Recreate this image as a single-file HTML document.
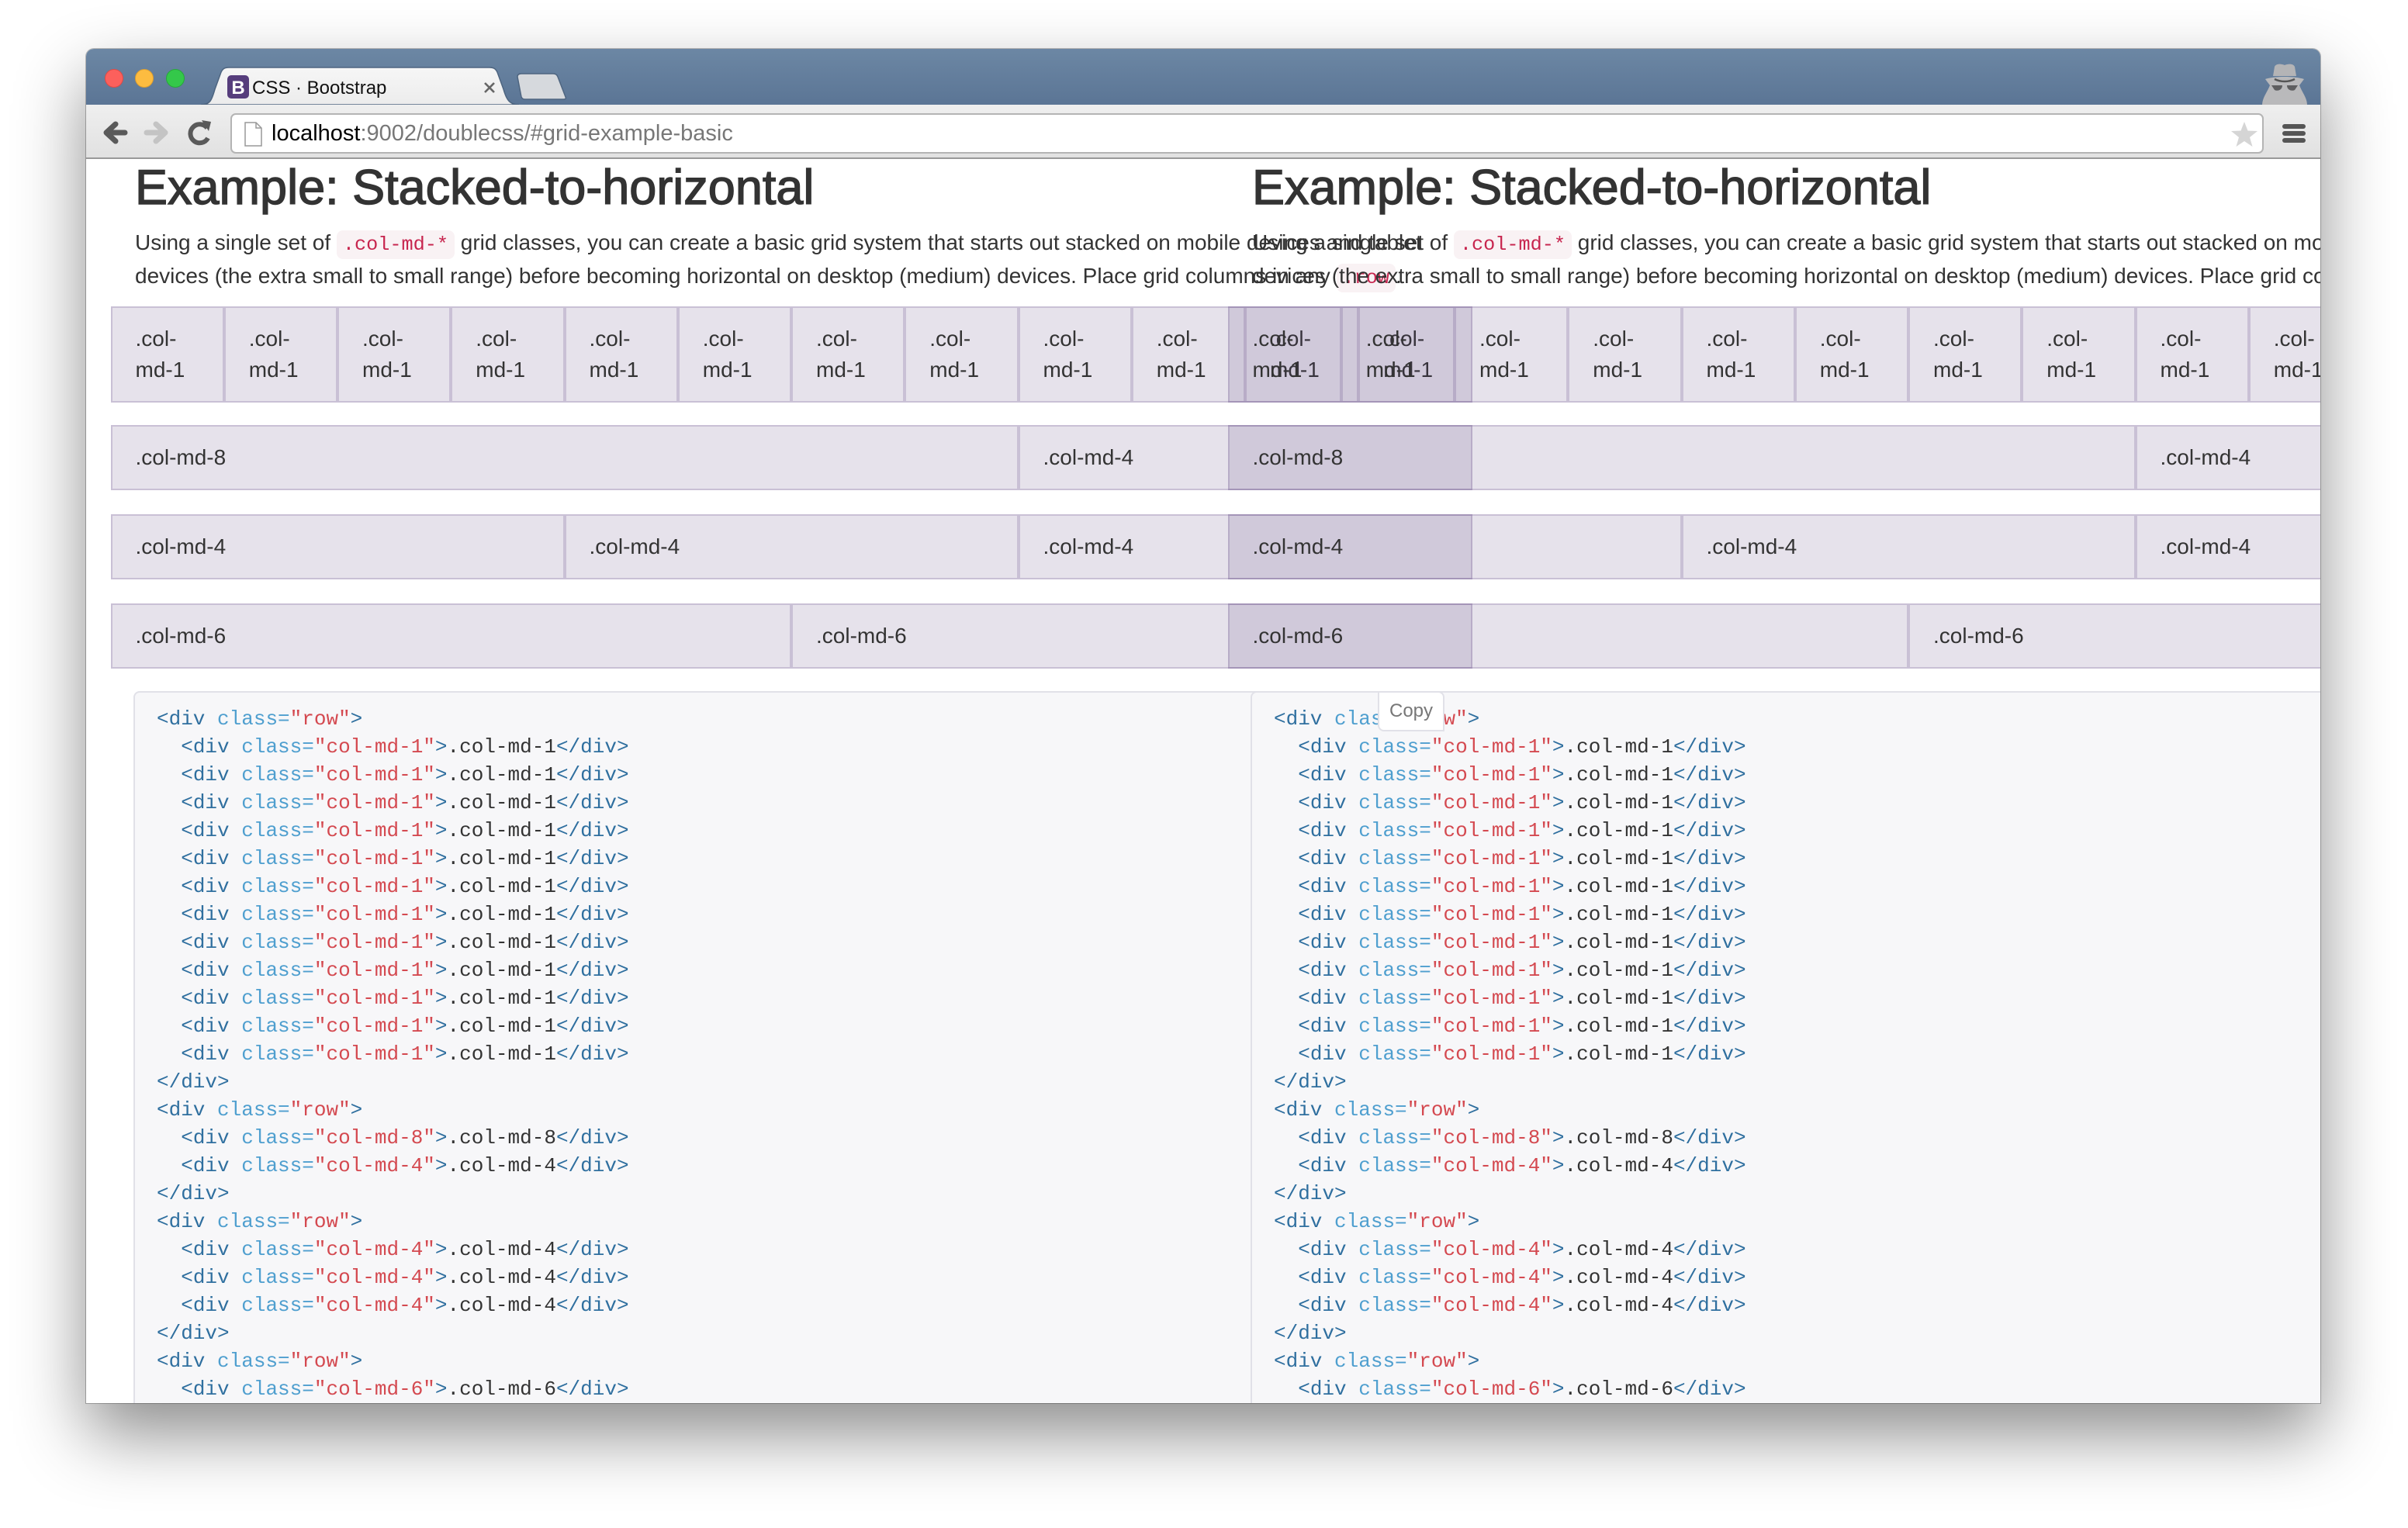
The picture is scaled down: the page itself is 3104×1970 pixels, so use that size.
<!DOCTYPE html>
<html><head><meta charset="utf-8"><style>
*{box-sizing:border-box;margin:0;padding:0}
body{width:3104px;height:1970px;background:#fff;overflow:hidden;position:relative;font-family:"Liberation Sans",Arial,sans-serif}
#win{position:absolute;left:111px;top:63px;width:2880px;height:1746px;border-radius:10px 10px 0 0;overflow:hidden;background:#fff;box-shadow:0 40px 90px rgba(0,0,0,.45),0 0 0 1px rgba(0,0,0,.25)}
#title{position:absolute;left:0;top:0;width:100%;height:72px;background:linear-gradient(#6c87a4,#5b7595)}
#tool{position:absolute;left:0;top:72px;width:100%;height:70px;background:linear-gradient(#efefef,#e1e1e1);border-bottom:2px solid #999}
.light{position:absolute;top:26px;width:24px;height:24px;border-radius:50%}
#url{position:absolute;left:186px;top:11px;width:2621px;height:52px;background:#fff;border:2px solid #b4b4b4;border-radius:7px}
#url span.t{position:absolute;left:51px;top:8px;font-size:29px;color:#000;white-space:nowrap}
#content{position:absolute;left:0;top:144px;width:100%;height:1602px;overflow:hidden}
.layer{position:absolute;top:0;width:1500px}
h2{position:absolute;left:63px;top:4px;font-size:63px;line-height:63px;font-weight:normal;color:#333;white-space:nowrap;-webkit-text-stroke:1.4px #333}
.p{position:absolute;left:63px;top:86px;font-size:28px;line-height:40px;color:#333;white-space:nowrap}
code{font-family:"Liberation Mono",monospace;font-size:25.2px;color:#c7254e;background:#f9f2f4;padding:4px 8px;border-radius:8px}
.row{position:absolute;left:0;display:flex}
.c{flex:none;background:rgba(86,61,124,.15);border:2px solid rgba(86,61,124,.2);padding:20px 0 20px 30px;font-size:28px;line-height:40px;color:#333;white-space:nowrap}
.pre{position:absolute;top:684px;height:1000px;background:#f7f7f9;border:2px solid #e1e1e8;border-radius:8px}
.code{position:absolute;top:701.5px;font-family:"Liberation Mono",monospace;font-size:26px;line-height:36px;color:#333;white-space:pre}
.t{color:#2f6f9f}.a{color:#4f9fcf}.s{color:#d44950}
</style></head><body>
<div id="win">
 <div id="title">
  <div class="light" style="left:23.5px;background:#fc605c;border:1px solid #de4a45"></div>
  <div class="light" style="left:63px;background:#fdbc40;border:1px solid #de9f2f"></div>
  <div class="light" style="left:103px;background:#34c84a;border:1px solid #27a73a"></div>
  <svg style="position:absolute;left:0;top:0" width="700" height="72">
   <defs><linearGradient id="tg" x1="0" y1="0" x2="0" y2="1"><stop offset="0" stop-color="#f6f6f6"/><stop offset="1" stop-color="#ececec"/></linearGradient></defs>
   <path d="M148 72 C160 72 162 66 166 52 L174 30 C176 26 178 24 184 24 L520 24 C526 24 528 26 530 30 L538 52 C542 66 546 72 558 72 Z" fill="url(#tg)" stroke="#4e6580" stroke-width="1.5"/>
   <path d="M556 36 C556 33 558 32 561 32 L602 32 C605 32 607 33 608 36 L618 62 C619 64 618 65 615 65 L566 65 C563 65 562 64 561 62 Z" fill="#d6d9dd" stroke="#4e6580" stroke-width="1.5"/>
   <rect x="182" y="34" width="28" height="30" rx="5" fill="#563d7c"/>
   <text x="196" y="58" font-family="Liberation Sans" font-weight="bold" font-size="24" fill="#fff" text-anchor="middle">B</text>
   <text x="214" y="58" font-family="Liberation Sans" font-size="24" fill="#111">CSS · Bootstrap</text>
   <path d="M514 44 L526 56 M526 44 L514 56" stroke="#666" stroke-width="2.6"/>
  </svg>
  <svg style="position:absolute;left:2801px;top:17px" width="66" height="56" viewBox="0 0 66 56">
   <path d="M18 18 L20 6 C22 2 28 2 33 4 C38 2 44 2 46 6 L48 18 Z" fill="#b4b4b6"/>
   <path d="M8 22 C20 18 46 18 58 22 L52 30 C56 40 62 46 62 56 L4 56 C4 46 10 40 14 30 Z" fill="#b9b9bb"/>
   <path d="M20 22 C28 26 38 26 46 22" stroke="#555" stroke-width="2.5" fill="none"/>
   <path d="M16 30 L30 30 C30 36 24 38 20 36 Z M36 30 L50 30 L46 36 C42 38 36 36 36 30 Z" fill="#5e5e60"/>
  </svg>
 </div>
 <div id="tool">
  <svg style="position:absolute;left:0;top:0" width="240" height="70">
   <path d="M50 36 L30 36 M38 25 L26 36 L38 47" stroke="#5a5a5a" stroke-width="7" fill="none" stroke-linecap="round" stroke-linejoin="round"/>
   <path d="M78 36 L100 36 M90 25 L102 36 L90 47" stroke="#c4c4c4" stroke-width="7" fill="none" stroke-linecap="round" stroke-linejoin="round"/>
   <path d="M156 30 A12 12 0 1 0 157 43" stroke="#5a5a5a" stroke-width="6" fill="none"/>
   <path d="M149 20 L161 22 L158 34 Z" fill="#5a5a5a"/>
  </svg>
  <div id="url">
   <svg style="position:absolute;left:16px;top:9px" width="24" height="32"><path d="M1 1 L15 1 L22 8 L22 31 L1 31 Z" fill="#fff" stroke="#999" stroke-width="1.5"/><path d="M15 1 L15 8 L22 8" fill="none" stroke="#999" stroke-width="1.5"/></svg>
   <span class="t">localhost<span style="color:#777">:9002/doublecss/#grid-example-basic</span></span>
   <svg style="position:absolute;left:2576px;top:8px" width="36" height="34" viewBox="0 0 36 34"><path d="M18 1 L22.5 12.5 L35 13 L25 21 L28.5 33 L18 26 L7.5 33 L11 21 L1 13 L13.5 12.5 Z" fill="#d5d5d5"/></svg>
  </div>
  <svg style="position:absolute;left:2831px;top:23px" width="32" height="28"><rect x="0" y="2" width="30" height="6" rx="3" fill="#555"/><rect x="0" y="11" width="30" height="6" rx="3" fill="#555"/><rect x="0" y="20" width="30" height="6" rx="3" fill="#555"/></svg>
 </div>
 <div id="content">
  <div class="layer" style="left:0">
   <h2>Example: Stacked-to-horizontal</h2>
   <div class="p">Using a single set of <code>.col-md-*</code> grid classes, you can create a basic grid system that starts out stacked on mobile devices and tablet<br>devices (the extra small to small range) before becoming horizontal on desktop (medium) devices. Place grid columns in any <code>.row</code>.</div>
   <div class="row" style="top:187.5px;left:31.5px">
    <div class="c" style="width:146.25px">.col-<br>md-1</div><div class="c" style="width:146.25px">.col-<br>md-1</div><div class="c" style="width:146.25px">.col-<br>md-1</div><div class="c" style="width:146.25px">.col-<br>md-1</div><div class="c" style="width:146.25px">.col-<br>md-1</div><div class="c" style="width:146.25px">.col-<br>md-1</div><div class="c" style="width:146.25px">.col-<br>md-1</div><div class="c" style="width:146.25px">.col-<br>md-1</div><div class="c" style="width:146.25px">.col-<br>md-1</div><div class="c" style="width:146.25px">.col-<br>md-1</div><div class="c" style="width:146.25px">.col-<br>md-1</div><div class="c" style="width:146.25px">.col-<br>md-1</div>
   </div>
   <div class="row" style="top:341px;left:31.5px"><div class="c" style="width:1170px">.col-md-8</div><div class="c" style="width:585px">.col-md-4</div></div>
   <div class="row" style="top:456px;left:31.5px"><div class="c" style="width:585px">.col-md-4</div><div class="c" style="width:585px">.col-md-4</div><div class="c" style="width:585px">.col-md-4</div></div>
   <div class="row" style="top:571px;left:31.5px"><div class="c" style="width:877.5px">.col-md-6</div><div class="c" style="width:877.5px">.col-md-6</div></div>
   <div class="pre" style="left:61px;width:1460px"></div>
   <div class="code" style="left:91px"><span class="t">&lt;div</span> <span class="a">class=</span><span class="s">"row"</span><span class="t">&gt;</span>
  <span class="t">&lt;div</span> <span class="a">class=</span><span class="s">"col-md-1"</span><span class="t">&gt;</span>.col-md-1<span class="t">&lt;/div&gt;</span>
  <span class="t">&lt;div</span> <span class="a">class=</span><span class="s">"col-md-1"</span><span class="t">&gt;</span>.col-md-1<span class="t">&lt;/div&gt;</span>
  <span class="t">&lt;div</span> <span class="a">class=</span><span class="s">"col-md-1"</span><span class="t">&gt;</span>.col-md-1<span class="t">&lt;/div&gt;</span>
  <span class="t">&lt;div</span> <span class="a">class=</span><span class="s">"col-md-1"</span><span class="t">&gt;</span>.col-md-1<span class="t">&lt;/div&gt;</span>
  <span class="t">&lt;div</span> <span class="a">class=</span><span class="s">"col-md-1"</span><span class="t">&gt;</span>.col-md-1<span class="t">&lt;/div&gt;</span>
  <span class="t">&lt;div</span> <span class="a">class=</span><span class="s">"col-md-1"</span><span class="t">&gt;</span>.col-md-1<span class="t">&lt;/div&gt;</span>
  <span class="t">&lt;div</span> <span class="a">class=</span><span class="s">"col-md-1"</span><span class="t">&gt;</span>.col-md-1<span class="t">&lt;/div&gt;</span>
  <span class="t">&lt;div</span> <span class="a">class=</span><span class="s">"col-md-1"</span><span class="t">&gt;</span>.col-md-1<span class="t">&lt;/div&gt;</span>
  <span class="t">&lt;div</span> <span class="a">class=</span><span class="s">"col-md-1"</span><span class="t">&gt;</span>.col-md-1<span class="t">&lt;/div&gt;</span>
  <span class="t">&lt;div</span> <span class="a">class=</span><span class="s">"col-md-1"</span><span class="t">&gt;</span>.col-md-1<span class="t">&lt;/div&gt;</span>
  <span class="t">&lt;div</span> <span class="a">class=</span><span class="s">"col-md-1"</span><span class="t">&gt;</span>.col-md-1<span class="t">&lt;/div&gt;</span>
  <span class="t">&lt;div</span> <span class="a">class=</span><span class="s">"col-md-1"</span><span class="t">&gt;</span>.col-md-1<span class="t">&lt;/div&gt;</span>
<span class="t">&lt;/div&gt;</span>
<span class="t">&lt;div</span> <span class="a">class=</span><span class="s">"row"</span><span class="t">&gt;</span>
  <span class="t">&lt;div</span> <span class="a">class=</span><span class="s">"col-md-8"</span><span class="t">&gt;</span>.col-md-8<span class="t">&lt;/div&gt;</span>
  <span class="t">&lt;div</span> <span class="a">class=</span><span class="s">"col-md-4"</span><span class="t">&gt;</span>.col-md-4<span class="t">&lt;/div&gt;</span>
<span class="t">&lt;/div&gt;</span>
<span class="t">&lt;div</span> <span class="a">class=</span><span class="s">"row"</span><span class="t">&gt;</span>
  <span class="t">&lt;div</span> <span class="a">class=</span><span class="s">"col-md-4"</span><span class="t">&gt;</span>.col-md-4<span class="t">&lt;/div&gt;</span>
  <span class="t">&lt;div</span> <span class="a">class=</span><span class="s">"col-md-4"</span><span class="t">&gt;</span>.col-md-4<span class="t">&lt;/div&gt;</span>
  <span class="t">&lt;div</span> <span class="a">class=</span><span class="s">"col-md-4"</span><span class="t">&gt;</span>.col-md-4<span class="t">&lt;/div&gt;</span>
<span class="t">&lt;/div&gt;</span>
<span class="t">&lt;div</span> <span class="a">class=</span><span class="s">"row"</span><span class="t">&gt;</span>
  <span class="t">&lt;div</span> <span class="a">class=</span><span class="s">"col-md-6"</span><span class="t">&gt;</span>.col-md-6<span class="t">&lt;/div&gt;</span>
  <span class="t">&lt;div</span> <span class="a">class=</span><span class="s">"col-md-6"</span><span class="t">&gt;</span>.col-md-6<span class="t">&lt;/div&gt;</span></div>
  </div>
  <div class="layer" style="left:1440px;width:1500px">
   <h2>Example: Stacked-to-horizontal</h2>
   <div class="p">Using a single set of <code>.col-md-*</code> grid classes, you can create a basic grid system that starts out stacked on mobile devices and tablet<br>devices (the extra small to small range) before becoming horizontal on desktop (medium) devices. Place grid columns in any <code>.row</code>.</div>
   <div class="row" style="top:187.5px;left:31.5px">
    <div class="c" style="width:146.25px">.col-<br>md-1</div><div class="c" style="width:146.25px">.col-<br>md-1</div><div class="c" style="width:146.25px">.col-<br>md-1</div><div class="c" style="width:146.25px">.col-<br>md-1</div><div class="c" style="width:146.25px">.col-<br>md-1</div><div class="c" style="width:146.25px">.col-<br>md-1</div><div class="c" style="width:146.25px">.col-<br>md-1</div><div class="c" style="width:146.25px">.col-<br>md-1</div><div class="c" style="width:146.25px">.col-<br>md-1</div><div class="c" style="width:146.25px">.col-<br>md-1</div><div class="c" style="width:146.25px">.col-<br>md-1</div><div class="c" style="width:146.25px">.col-<br>md-1</div>
   </div>
   <div class="row" style="top:341px;left:31.5px"><div class="c" style="width:1170px">.col-md-8</div><div class="c" style="width:585px">.col-md-4</div></div>
   <div class="row" style="top:456px;left:31.5px"><div class="c" style="width:585px">.col-md-4</div><div class="c" style="width:585px">.col-md-4</div><div class="c" style="width:585px">.col-md-4</div></div>
   <div class="row" style="top:571px;left:31.5px"><div class="c" style="width:877.5px">.col-md-6</div><div class="c" style="width:877.5px">.col-md-6</div></div>
   <div class="pre" style="left:61px;width:1600px"></div>
   <div class="code" style="left:91px"><span class="t">&lt;div</span> <span class="a">class=</span><span class="s">"row"</span><span class="t">&gt;</span>
  <span class="t">&lt;div</span> <span class="a">class=</span><span class="s">"col-md-1"</span><span class="t">&gt;</span>.col-md-1<span class="t">&lt;/div&gt;</span>
  <span class="t">&lt;div</span> <span class="a">class=</span><span class="s">"col-md-1"</span><span class="t">&gt;</span>.col-md-1<span class="t">&lt;/div&gt;</span>
  <span class="t">&lt;div</span> <span class="a">class=</span><span class="s">"col-md-1"</span><span class="t">&gt;</span>.col-md-1<span class="t">&lt;/div&gt;</span>
  <span class="t">&lt;div</span> <span class="a">class=</span><span class="s">"col-md-1"</span><span class="t">&gt;</span>.col-md-1<span class="t">&lt;/div&gt;</span>
  <span class="t">&lt;div</span> <span class="a">class=</span><span class="s">"col-md-1"</span><span class="t">&gt;</span>.col-md-1<span class="t">&lt;/div&gt;</span>
  <span class="t">&lt;div</span> <span class="a">class=</span><span class="s">"col-md-1"</span><span class="t">&gt;</span>.col-md-1<span class="t">&lt;/div&gt;</span>
  <span class="t">&lt;div</span> <span class="a">class=</span><span class="s">"col-md-1"</span><span class="t">&gt;</span>.col-md-1<span class="t">&lt;/div&gt;</span>
  <span class="t">&lt;div</span> <span class="a">class=</span><span class="s">"col-md-1"</span><span class="t">&gt;</span>.col-md-1<span class="t">&lt;/div&gt;</span>
  <span class="t">&lt;div</span> <span class="a">class=</span><span class="s">"col-md-1"</span><span class="t">&gt;</span>.col-md-1<span class="t">&lt;/div&gt;</span>
  <span class="t">&lt;div</span> <span class="a">class=</span><span class="s">"col-md-1"</span><span class="t">&gt;</span>.col-md-1<span class="t">&lt;/div&gt;</span>
  <span class="t">&lt;div</span> <span class="a">class=</span><span class="s">"col-md-1"</span><span class="t">&gt;</span>.col-md-1<span class="t">&lt;/div&gt;</span>
  <span class="t">&lt;div</span> <span class="a">class=</span><span class="s">"col-md-1"</span><span class="t">&gt;</span>.col-md-1<span class="t">&lt;/div&gt;</span>
<span class="t">&lt;/div&gt;</span>
<span class="t">&lt;div</span> <span class="a">class=</span><span class="s">"row"</span><span class="t">&gt;</span>
  <span class="t">&lt;div</span> <span class="a">class=</span><span class="s">"col-md-8"</span><span class="t">&gt;</span>.col-md-8<span class="t">&lt;/div&gt;</span>
  <span class="t">&lt;div</span> <span class="a">class=</span><span class="s">"col-md-4"</span><span class="t">&gt;</span>.col-md-4<span class="t">&lt;/div&gt;</span>
<span class="t">&lt;/div&gt;</span>
<span class="t">&lt;div</span> <span class="a">class=</span><span class="s">"row"</span><span class="t">&gt;</span>
  <span class="t">&lt;div</span> <span class="a">class=</span><span class="s">"col-md-4"</span><span class="t">&gt;</span>.col-md-4<span class="t">&lt;/div&gt;</span>
  <span class="t">&lt;div</span> <span class="a">class=</span><span class="s">"col-md-4"</span><span class="t">&gt;</span>.col-md-4<span class="t">&lt;/div&gt;</span>
  <span class="t">&lt;div</span> <span class="a">class=</span><span class="s">"col-md-4"</span><span class="t">&gt;</span>.col-md-4<span class="t">&lt;/div&gt;</span>
<span class="t">&lt;/div&gt;</span>
<span class="t">&lt;div</span> <span class="a">class=</span><span class="s">"row"</span><span class="t">&gt;</span>
  <span class="t">&lt;div</span> <span class="a">class=</span><span class="s">"col-md-6"</span><span class="t">&gt;</span>.col-md-6<span class="t">&lt;/div&gt;</span>
  <span class="t">&lt;div</span> <span class="a">class=</span><span class="s">"col-md-6"</span><span class="t">&gt;</span>.col-md-6<span class="t">&lt;/div&gt;</span></div>
  </div>
  <div style="position:absolute;left:1665px;top:684px;width:86px;height:52px;background:#fff;border:2px solid #e1e1e8;border-radius:0 8px 0 8px;font-size:24px;line-height:48px;color:#777;text-align:center">Copy</div>
 </div>
</div>
</body></html>
